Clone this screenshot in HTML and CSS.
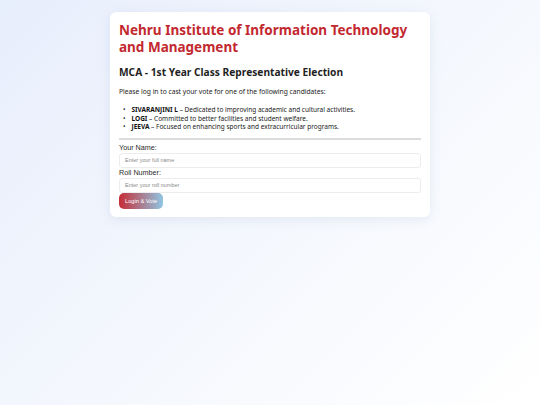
FILE: index.html
```html
<!DOCTYPE html>
<html lang="en">
<head>
<meta charset="utf-8">
<title>Class Representative Election</title>
<link rel="stylesheet" href="styles.css">
</head>
<body>
<div class="card">
  <h1 class="title">Nehru Institute of Information Technology and Management</h1>
  <h2 class="subtitle">MCA - 1st Year Class Representative Election</h2>
  <p class="intro">Please log in to cast your vote for one of the following candidates:</p>
  <ul class="candidates">
    <li><strong>SIVARANJINI L</strong> – Dedicated to improving academic and cultural activities.</li>
    <li><strong>LOGI</strong> – Committed to better facilities and student welfare.</li>
    <li><strong>JEEVA</strong> – Focused on enhancing sports and extracurricular programs.</li>
  </ul>
  <hr class="divider">
  <form class="login">
    <label class="field-label" for="name">Your Name:</label>
    <input class="field" id="name" type="text" placeholder="Enter your full name">
    <label class="field-label" for="roll">Roll Number:</label>
    <input class="field" id="roll" type="text" placeholder="Enter your roll number">
    <button class="submit" type="button">Login &amp; Vote</button>
  </form>
</div>
</body>
</html>
```
FILE: styles.css
```css
html, body {
  margin: 0;
  padding: 0;
  height: 100%;
}
body {
  background: linear-gradient(135deg, #e7eefc 0%, #f4f7fd 50%, #ffffff 100%);
  font-family: "Noto Sans", "DejaVu Sans", sans-serif;
  color: #222;
}
.card {
  width: 302px;
  margin: 12px auto 0;
  padding: 10px 9px 8px;
  background: #fff;
  border-radius: 6px;
  box-shadow: 0 3px 12px rgba(120, 140, 180, 0.14);
}
.title {
  margin: 0;
  font-size: 13.5px;
  line-height: 17px;
  font-weight: 700;
  color: #c3282f;
}
.subtitle {
  margin: 9px 0 0;
  font-size: 10.2px;
  line-height: 15px;
  font-weight: 700;
  color: #1f1f1f;
}
.intro {
  margin: 8px 0 0;
  font-size: 6.7px;
  line-height: 8.85px;
  color: #222;
}
.candidates {
  margin: 9px 0 0;
  padding-left: 4px;
  list-style: none;
  font-size: 6.5px;
  line-height: 8.7px;
  color: #222;
}
.candidates li::before {
  content: "•";
  display: inline-block;
  width: 8.5px;
}
.candidates strong {
  font-weight: 700;
  color: #111;
}
.divider {
  margin: 6px 0 0;
  border: 0;
  border-top: 2px solid #dcdcdc;
  height: 0;
}
.login {
  display: flex;
  flex-direction: column;
  align-items: flex-start;
  margin-top: 4px;
}
.field-label {
  font-family: "Liberation Sans", Arial, sans-serif;
  font-size: 7.2px;
  line-height: 8px;
  color: #2a2a2a;
}
.field + .field-label {
  margin-top: 1px;
}
.field {
  box-sizing: border-box;
  width: 100%;
  height: 15px;
  margin: 1px 0 0;
  padding: 0 5px;
  border: 1px solid #ececec;
  border-radius: 3px;
  font-family: "Liberation Sans", Arial, sans-serif;
  font-size: 5.5px;
  background: #fff;
  outline: none;
}
.field::placeholder {
  color: #8a8a8a;
}
.submit {
  height: 15.5px;
  margin-top: 0.5px;
  padding: 0 6px;
  border: 0;
  border-radius: 5px;
  background: linear-gradient(90deg, #c62d36 0%, #8fc6e4 100%);
  color: #fff;
  font-family: "Liberation Sans", Arial, sans-serif;
  font-size: 5.7px;
  cursor: pointer;
}
```
